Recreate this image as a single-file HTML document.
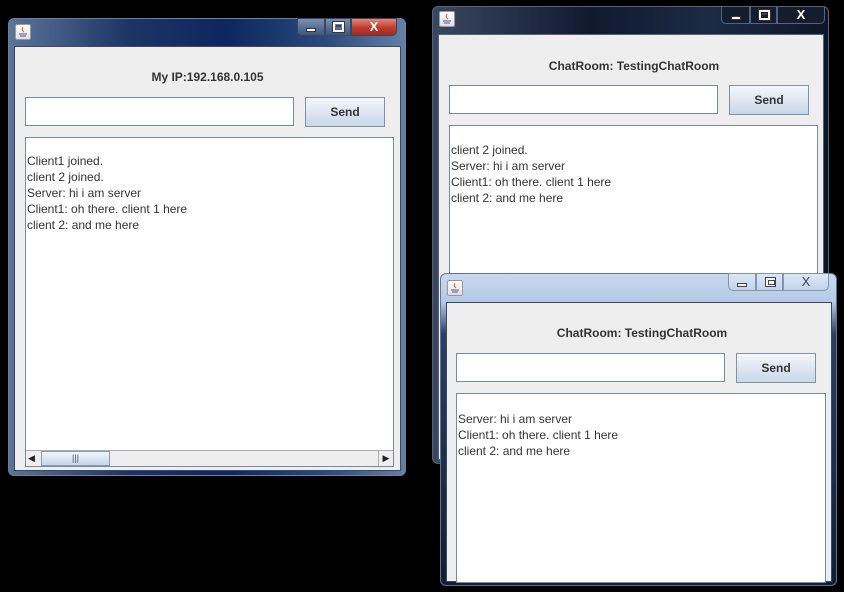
<!DOCTYPE html>
<html><head><meta charset="utf-8">
<style>
*{margin:0;padding:0;box-sizing:border-box}
body{width:844px;height:592px;background:#000;position:relative;overflow:hidden;font-family:"Liberation Sans",Arial,sans-serif;}
.win{position:absolute;border-radius:6px;border:1px solid #6d7f99;}
.content{position:absolute;background:#eeeeee;border:1px solid #3a4a66;}
.lbl{position:absolute;font-size:12px;font-weight:bold;color:#333;text-align:center;}
.tf{position:absolute;background:#fff;border:1px solid #7a8a9e;}
.btn{position:absolute;border:1px solid #8091a8;background:linear-gradient(#f4f7fb,#dfe7f1 50%,#c9d7e8);font-size:12px;font-weight:bold;color:#333;text-align:center;}
.ta{position:absolute;background:#fff;border:1px solid #7a8a9e;font-size:12px;line-height:16px;color:#333;padding-left:1px;white-space:pre;}
.icon{position:absolute;width:16px;height:16px;background:linear-gradient(#fff,#dde);border:1px solid #999;border-radius:2px;}
.cap{position:absolute;display:flex;}
.cap>div{position:relative;height:18px;border:1px solid #39475e;color:#fff;font-size:13px;font-weight:bold;text-align:center;line-height:16px;}
.mn{position:absolute;left:50%;top:9px;width:10px;height:4px;margin-left:-5px;background:#fff;border:1px solid #334;}
.mx{position:absolute;left:50%;top:3px;width:11px;height:10px;margin-left:-5px;border:2px solid #fff;outline:1px solid #334;}
.mx::after{content:"";position:absolute;left:1px;top:1px;width:5px;height:2px;background:#445;}
.lt .mn{background:#f4f7fb;border-color:#445;height:4px}
.lt .mx{border:1px solid #445;outline:none;background:#f4f7fb}
.lt .mx::after{left:2px;top:2px;width:5px;height:3px;background:none;border:1px solid #445}
</style></head><body>

<!-- Window 1 -->
<div class="win" style="left:8px;top:18px;width:398px;height:458px;background:linear-gradient(90deg,#5b7598 0%,#1b3566 30%,#0c275e 55%,#2a4a7c 80%,#6480a6 100%);"></div>
<div class="icon" style="left:15px;top:24px;"><svg width="14" height="14"><path d="M7 2 Q5 5 8 7" stroke="#e06020" fill="none"/><path d="M3 9h8M4 11h6" stroke="#557" /></svg></div>
<div class="cap" style="left:297px;top:18px;">
 <div style="width:28px;background:linear-gradient(#7c8fae,#3d557e);border-radius:0 0 0 5px"><span class="mn"></span></div>
 <div style="width:26px;background:linear-gradient(#7c8fae,#3d557e)"><span class="mx"></span></div>
 <div style="width:46px;background:linear-gradient(#e0897a,#c0392b 55%,#a52a1e);border-radius:0 0 5px 0">X</div>
</div>
<div class="content" style="left:14px;top:46px;width:387px;height:425px;"></div>
<div class="lbl" style="left:14px;top:70px;width:387px;">My IP:192.168.0.105</div>
<div class="tf" style="left:25px;top:97px;width:269px;height:29px;"></div>
<div class="btn" style="left:305px;top:97px;width:80px;height:30px;line-height:28px;">Send</div>
<div class="ta" style="left:25px;top:137px;width:369px;height:330px;padding-top:15px;">Client1 joined.
client 2 joined.
Server: hi i am server
Client1: oh there. client 1 here
client 2: and me here</div>
<div style="position:absolute;left:26px;top:450px;width:367px;height:16px;background:#eee;border-top:1px solid #aab;"></div>
<div style="position:absolute;left:28px;top:453px;font-size:9px;color:#222">◀</div>
<div style="position:absolute;left:41px;top:451px;width:69px;height:15px;background:linear-gradient(#f2f6fb,#c6d5ea);border:1px solid #8a9bb5;font-size:9px;text-align:center;line-height:13px;color:#556">|||</div>
<div style="position:absolute;left:378px;top:451px;width:15px;height:15px;border-left:1px solid #aab;font-size:9px;color:#222;text-align:center;line-height:15px">▶</div>

<!-- Window 2 -->
<div class="win" style="left:432px;top:6px;width:397px;height:458px;background:linear-gradient(90deg,#3a4760,#0f1a2e 40%,#1c2a45 70%,#0d1628);border-color:#55627a"></div>
<div class="icon" style="left:439px;top:11px;"><svg width="14" height="14"><path d="M7 2 Q5 5 8 7" stroke="#e06020" fill="none"/><path d="M3 9h8M4 11h6" stroke="#557" /></svg></div>
<div class="cap" style="left:721px;top:6px;">
 <div style="width:29px;background:#141d2e;border-color:#55627a;border-radius:0 0 0 5px"><span class="mn"></span></div>
 <div style="width:27px;background:#141d2e;border-color:#55627a"><span class="mx"></span></div>
 <div style="width:48px;background:#141d2e;border-color:#55627a;border-radius:0 0 5px 0">X</div>
</div>
<div class="content" style="left:438px;top:34px;width:386px;height:426px;border-color:#55627a"></div>
<div class="lbl" style="left:438px;top:59px;width:392px;">ChatRoom: TestingChatRoom</div>
<div class="tf" style="left:449px;top:85px;width:269px;height:29px;"></div>
<div class="btn" style="left:729px;top:85px;width:80px;height:30px;line-height:28px;">Send</div>
<div class="ta" style="left:449px;top:125px;width:369px;height:200px;padding-top:16px;">client 2 joined.
Server: hi i am server
Client1: oh there. client 1 here
client 2: and me here</div>

<!-- Window 3 -->
<div class="win" style="left:440px;top:273px;width:397px;height:313px;background:linear-gradient(#c9d9ef 0px,#b5cae6 28px,#2c3f60 60px,#0f1d36 100%);border-color:#5f7394"></div>
<div class="icon" style="left:447px;top:280px;"><svg width="14" height="14"><path d="M7 2 Q5 5 8 7" stroke="#e06020" fill="none"/><path d="M3 9h8M4 11h6" stroke="#557" /></svg></div>
<div class="cap lt" style="left:728px;top:273px;">
 <div style="width:28px;background:linear-gradient(#dde8f6,#c2d3ea);border-color:#8494ad;color:#445;border-radius:0 0 0 5px"><span class="mn"></span></div>
 <div style="width:27px;background:linear-gradient(#dde8f6,#c2d3ea);border-color:#8494ad;color:#445"><span class="mx"></span></div>
 <div style="width:46px;background:linear-gradient(#dde8f6,#c2d3ea);border-color:#8494ad;color:#445;font-weight:normal;border-radius:0 0 5px 0">X</div>
</div>
<div class="content" style="left:446px;top:302px;width:386px;height:280px;"></div>
<div class="lbl" style="left:446px;top:326px;width:392px;">ChatRoom: TestingChatRoom</div>
<div class="tf" style="left:456px;top:353px;width:269px;height:29px;"></div>
<div class="btn" style="left:736px;top:353px;width:80px;height:30px;line-height:28px;">Send</div>
<div class="ta" style="left:456px;top:393px;width:370px;height:190px;padding-top:17px;">Server: hi i am server
Client1: oh there. client 1 here
client 2: and me here</div>

</body></html>
